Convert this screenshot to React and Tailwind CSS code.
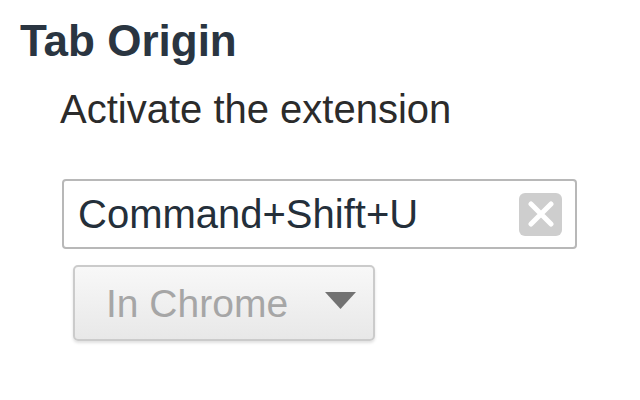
export default function App() {
  return (
    <div className="w-[640px] h-[400px] bg-white overflow-hidden font-['Liberation_Sans',Arial,sans-serif]">
      <div className="pl-[20px] pt-[19px]">
        <h1 className="text-[44px] leading-[44px] font-bold text-[#2a3541]">Tab Origin</h1>

        <div className="pl-[40px] mt-[26px]">
          <p className="text-[40px] leading-[40px] text-[#2b2b2b]">Activate the extension</p>
        </div>

        <div className="pl-[42px] mt-[50px]">
          <div className="w-[515px] h-[70px] border-2 border-[#b8b8b8] rounded-[4px] flex items-center justify-between pl-[14px] pr-[13px]">
            <span className="text-[40px] leading-[40px] text-[#242f3a]">Command+Shift+U</span>
            <div className="w-[43px] h-[43px] rounded-[6px] bg-[#cecece] flex items-center justify-center">
              <svg width="26" height="26" viewBox="0 0 26 26">
                <path d="M3 3 L23 23 M23 3 L3 23" stroke="#ffffff" strokeWidth="5" strokeLinecap="round" />
              </svg>
            </div>
          </div>

          <div className="ml-[11px] mt-[16px] w-[302px] h-[76px] border-2 border-[#cbcbcb] rounded-[5px] bg-gradient-to-b from-[#f8f8f8] to-[#e8e8e8] shadow-[0_2px_3px_rgba(0,0,0,0.12)] flex items-center justify-between pl-[31px] pr-[17px]">
            <span className="text-[39px] leading-[39px] text-[#a6a6a6]">In Chrome</span>
            <svg width="31" height="17" viewBox="0 0 31 17" className="mb-[6px]">
              <polygon points="0,0 31,0 15.5,17" fill="#727272" />
            </svg>
          </div>
        </div>
      </div>
    </div>
  )
}
